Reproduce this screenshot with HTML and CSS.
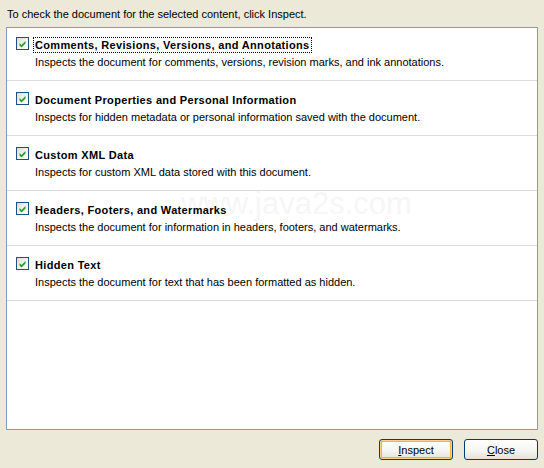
FILE: index.html
```html
<!DOCTYPE html>
<html>
<head>
<meta charset="utf-8">
<link rel="stylesheet" href="styles.css">
</head>
<body>
<div class="dialog">
  <div class="intro">To check the document for the selected content, click Inspect.</div>
  <div class="panel">
    <div class="watermark">www.java2s.com</div>
    <div class="row first">
      <span class="check"><svg width="13" height="13" viewBox="0 0 13 13"><path d="M3.5 6 L5.5 8 L9.5 4 L9.5 6.5 L5.5 10.5 L3.5 8.5 Z" fill="#21a121"/></svg></span>
      <div class="texts">
        <div class="title"><span class="focus">Comments, Revisions, Versions, and Annotations</span></div>
        <div class="desc">Inspects the document for comments, versions, revision marks, and ink annotations.</div>
      </div>
    </div>
    <div class="row">
      <span class="check"><svg width="13" height="13" viewBox="0 0 13 13"><path d="M3.5 6 L5.5 8 L9.5 4 L9.5 6.5 L5.5 10.5 L3.5 8.5 Z" fill="#21a121"/></svg></span>
      <div class="texts">
        <div class="title">Document Properties and Personal Information</div>
        <div class="desc">Inspects for hidden metadata or personal information saved with the document.</div>
      </div>
    </div>
    <div class="row">
      <span class="check"><svg width="13" height="13" viewBox="0 0 13 13"><path d="M3.5 6 L5.5 8 L9.5 4 L9.5 6.5 L5.5 10.5 L3.5 8.5 Z" fill="#21a121"/></svg></span>
      <div class="texts">
        <div class="title">Custom XML Data</div>
        <div class="desc">Inspects for custom XML data stored with this document.</div>
      </div>
    </div>
    <div class="row">
      <span class="check"><svg width="13" height="13" viewBox="0 0 13 13"><path d="M3.5 6 L5.5 8 L9.5 4 L9.5 6.5 L5.5 10.5 L3.5 8.5 Z" fill="#21a121"/></svg></span>
      <div class="texts">
        <div class="title">Headers, Footers, and Watermarks</div>
        <div class="desc">Inspects the document for information in headers, footers, and watermarks.</div>
      </div>
    </div>
    <div class="row">
      <span class="check"><svg width="13" height="13" viewBox="0 0 13 13"><path d="M3.5 6 L5.5 8 L9.5 4 L9.5 6.5 L5.5 10.5 L3.5 8.5 Z" fill="#21a121"/></svg></span>
      <div class="texts">
        <div class="title">Hidden Text</div>
        <div class="desc">Inspects the document for text that has been formatted as hidden.</div>
      </div>
    </div>
  </div>
  <div class="buttons">
    <button class="btn default"><u>I</u>nspect</button>
    <button class="btn"><u>C</u>lose</button>
  </div>
</div>
</body>
</html>
```
FILE: styles.css
```css
html, body {
  margin: 0;
  padding: 0;
}
body {
  width: 544px;
  height: 468px;
  background: #ece9d8;
  font-family: "Liberation Sans", Arial, sans-serif;
  font-size: 11px;
  color: #000;
  overflow: hidden;
}
.dialog {
  display: flex;
  flex-direction: column;
  height: 468px;
}
.intro {
  padding: 8px 0 0 7px;
  height: 27px;
  line-height: 13px;
  box-sizing: border-box;
}
.panel {
  position: relative;
  margin-left: 6px;
  width: 532px;
  height: 403px;
  box-sizing: border-box;
  border: 1px solid #7f9db9;
  background: #fff;
  overflow: hidden;
}
.row {
  position: relative;
  display: flex;
  align-items: flex-start;
  gap: 6px;
  padding: 11px 0 0 9px;
  border-bottom: 1px solid #dcdcdc;
  height: 55px;
  box-sizing: border-box;
}
.row.first {
  padding-top: 9px;
  height: 53px;
}
.check {
  width: 13px;
  height: 13px;
  box-sizing: border-box;
  border: 1px solid #1c5180;
  background: linear-gradient(135deg, #dcdcd7 0%, #f6f6f4 60%, #fff 100%);
  position: relative;
  flex: none;
}
.check svg {
  position: absolute;
  left: -1px;
  top: -1px;
}
.texts {
  display: flex;
  flex-direction: column;
  gap: 4px;
}
.title {
  font-weight: bold;
  line-height: 13px;
  margin-top: 2px;
  letter-spacing: 0.33px;
}
.focus {
  outline: 1px dotted #000;
  outline-offset: 1px;
}
.desc {
  line-height: 13px;
}
.watermark {
  position: absolute;
  left: 174px;
  top: 158px;
  font-size: 31px;
  color: #f6f6f6;
  font-family: "Liberation Sans", Arial, sans-serif;
  pointer-events: none;
}
.buttons {
  display: flex;
  justify-content: flex-end;
  gap: 11px;
  padding: 9px 6px 0 0;
}
.btn {
  width: 74px;
  height: 21px;
  box-sizing: border-box;
  border: 1px solid #003c74;
  border-radius: 3px;
  background: linear-gradient(#fff 0%, #f4f4f0 60%, #e3e2da 100%);
  font-family: "Liberation Sans", Arial, sans-serif;
  font-size: 11px;
  color: #000;
  padding: 0;
}
.btn.default {
  box-shadow: inset 0 0 0 1px #ffd38a, inset 0 0 0 2px #f5b041;
}
```
